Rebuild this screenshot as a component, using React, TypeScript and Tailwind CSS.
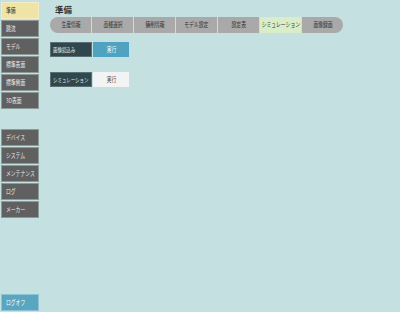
const topMenu = ["準備", "跳流", "モデル", "標準表面", "標準側面", "3D表面"];
const sysMenu = ["デバイス", "システム", "メンテナンス", "ログ", "メーカー"];
const tabs = ["生産情報", "品種選択", "鋳削情報", "モデル設定", "設定表", "シミュレーション", "画像録画"];

const font = { fontFamily: '"Noto Sans CJK JP", "Noto Sans", sans-serif' };

function Narrow({ children, center }: { children: string; center?: boolean }) {
  return (
    <span
      className={
        "inline-block whitespace-nowrap scale-x-[0.74] " + (center ? "origin-center" : "origin-left")
      }
    >
      {children}
    </span>
  );
}

function SideButton({ label, active }: { label: string; active?: boolean }) {
  return (
    <div
      className={
        "h-[17px] w-[38px] flex items-center pl-[4px] text-[6.5px] border " +
        (active
          ? "bg-[#efe3a6] border-[#f3ecc4] text-[#333]"
          : "bg-[#606060] border-[#8c9a9a] text-[#e8e8e8]")
      }
    >
      <Narrow>{label}</Narrow>
    </div>
  );
}

export default function App() {
  return (
    <div className="w-[400px] h-[312px] bg-[#c5e0e0] flex overflow-hidden" style={font}>
      <div className="w-[40px] flex flex-col pl-[1px] pt-[2px] pb-[1px]">
        <div className="flex flex-col gap-[1px]">
          {topMenu.map((m, i) => (
            <SideButton key={m} label={m} active={i === 0} />
          ))}
        </div>
        <div className="flex flex-col gap-[1px] mt-[20px]">
          {sysMenu.map((m) => (
            <SideButton key={m} label={m} />
          ))}
        </div>
        <div className="mt-auto h-[17px] w-[38px] flex items-center pl-[4px] text-[6.5px] bg-[#5aa5c0] border border-[#8cc4d6] text-white">
          <Narrow>ログオフ</Narrow>
        </div>
      </div>

      <div className="flex-1 pl-[10px] pt-[3px]">
        <div className="pl-[5px] text-[8.5px] font-bold text-[#333] leading-[12px]">準備</div>
        <div className="flex gap-[1px] mt-[2px]">
          {tabs.map((t, i) => (
            <div
              key={t}
              className={
                "w-[41px] h-[16px] flex items-center justify-center text-[6.5px] " +
                (i === 5 ? "bg-[#d9edc9] text-[#333] " : "bg-[#a9a9a9] text-[#333] ") +
                (i === 0 ? "rounded-l-full " : "") +
                (i === 6 ? "rounded-r-full " : "")
              }
            >
              <Narrow center>{t}</Narrow>
            </div>
          ))}
        </div>

        <div className="flex mt-[9px]">
          <div className="w-[42px] h-[15px] flex items-center pl-[2px] text-[6px] bg-[#2f474d] border border-[#5a7074] text-[#e8e8e8]">
            <Narrow>画像読込み</Narrow>
          </div>
          <div className="w-[36px] h-[15px] ml-[1px] flex items-center justify-center text-[6.5px] bg-[#4fa3c0] text-white">
            <Narrow center>実行</Narrow>
          </div>
        </div>

        <div className="flex mt-[15px]">
          <div className="w-[42px] h-[15px] flex items-center pl-[2px] text-[6px] bg-[#2f474d] border border-[#5a7074] text-[#e8e8e8]">
            <Narrow>シミュレーション</Narrow>
          </div>
          <div className="w-[36px] h-[15px] ml-[1px] flex items-center justify-center text-[6.5px] bg-[#f3f3f3] text-[#444]">
            <Narrow center>実行</Narrow>
          </div>
        </div>
      </div>
    </div>
  );
}
